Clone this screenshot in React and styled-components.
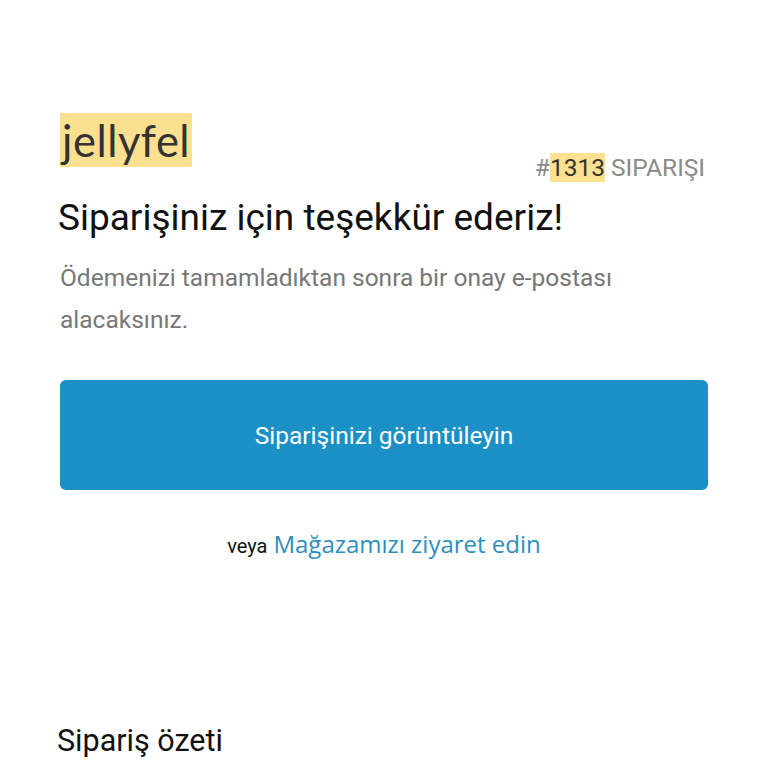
import React from 'react';
import styled, { createGlobalStyle } from 'styled-components';

const GlobalStyle = createGlobalStyle`
  html, body {
    margin: 0;
    padding: 0;
    background: #fff;
    font-family: Roboto, "Liberation Sans", sans-serif;
  }
`;

const Page = styled.div`
  padding: 113px 60px 0;
  width: 768px;
  box-sizing: border-box;
`;

const Header = styled.header`
  display: flex;
  justify-content: space-between;
  align-items: flex-start;
`;

const Logo = styled.div`
  display: inline-block;
  background: #fbe08f;
  height: 54px;
  line-height: 54px;
  padding: 0 2px;
  font-family: Lato, "Noto Sans", sans-serif;
  font-size: 43.5px;
  color: #333;
  letter-spacing: 0.5px;
`;

const OrderNumber = styled.div`
  margin-top: 40px;
  font-size: 24.5px;
  line-height: 29px;
  color: #8a8a8a;
  margin-right: 3px;
`;

const Mark = styled.span`
  background: #fbe08f;
  color: #333;
`;

const Title = styled.h1`
  margin: 15px 0 0;
  font-size: 37px;
  font-weight: 400;
  line-height: 42px;
  color: #111;
  margin-left: -2px;
`;

const Text = styled.p`
  margin: 18px 0 0;
  font-size: 24.5px;
  line-height: 42px;
  color: #777;
`;

const Button = styled.button`
  display: block;
  width: 100%;
  height: 110px;
  margin-top: 39px;
  border: 0;
  border-radius: 6px;
  background: #1b90c7;
  color: #fff;
  font-family: Roboto, "Liberation Sans", sans-serif;
  font-size: 24.5px;
  cursor: pointer;
`;

const Alt = styled.div`
  margin-top: 39px;
  text-align: center;
  font-size: 20px;
  color: #111;
  line-height: 30px;
`;

const StoreLink = styled.a`
  font-size: 24px;
  color: #2b90c0;
  text-decoration: none;
  margin-left: 6px;
  font-family: "Open Sans", "Noto Sans", sans-serif;
`;

const Summary = styled.h2`
  margin: 162px 0 0;
  font-size: 30.5px;
  font-weight: 400;
  color: #111;
  margin-left: -3px;
`;

export default function App() {
  return (
    <Page>
      <GlobalStyle />
      <Header>
        <Logo>jellyfel</Logo>
        <OrderNumber>
          #<Mark>1313</Mark> SIPARIŞI
        </OrderNumber>
      </Header>
      <Title>Siparişiniz için teşekkür ederiz!</Title>
      <Text>
        Ödemenizi tamamladıktan sonra bir onay e-postası
        <br />
        alacaksınız.
      </Text>
      <Button>Siparişinizi görüntüleyin</Button>
      <Alt>
        veya<StoreLink href="#">Mağazamızı ziyaret edin</StoreLink>
      </Alt>
      <Summary>Sipariş özeti</Summary>
    </Page>
  );
}
